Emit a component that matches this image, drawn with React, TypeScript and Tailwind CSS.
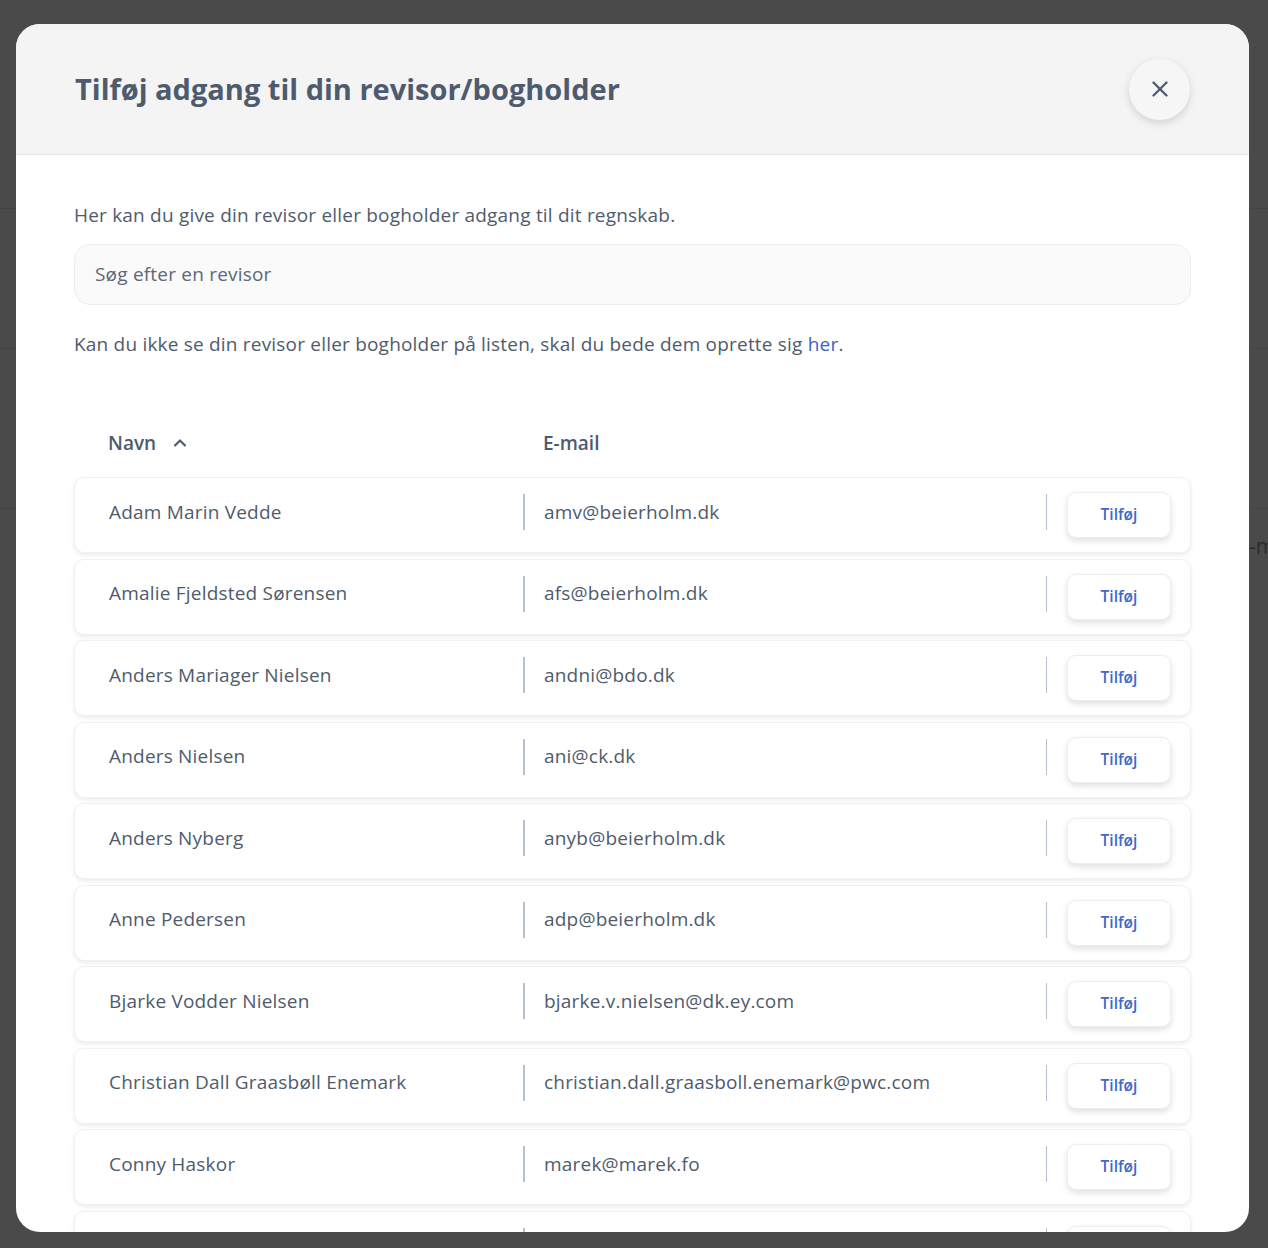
import React from "react";
import { X, ChevronUp } from "lucide-react";

const rows = [
  { name: "Adam Marin Vedde", email: "amv@beierholm.dk" },
  { name: "Amalie Fjeldsted Sørensen", email: "afs@beierholm.dk" },
  { name: "Anders Mariager Nielsen", email: "andni@bdo.dk" },
  { name: "Anders Nielsen", email: "ani@ck.dk" },
  { name: "Anders Nyberg", email: "anyb@beierholm.dk" },
  { name: "Anne Pedersen", email: "adp@beierholm.dk" },
  { name: "Bjarke Vodder Nielsen", email: "bjarke.v.nielsen@dk.ey.com" },
  { name: "Christian Dall Graasbøll Enemark", email: "christian.dall.graasboll.enemark@pwc.com" },
  { name: "Conny Haskor", email: "marek@marek.fo" },
  // next row is only partly scrolled into view, its text sits below the fold
  { name: "", email: "" },
];

function Row({ name, email }: { name: string; email: string }) {
  return (
    <div className="flex items-center h-[76px] shrink-0 bg-white rounded-[10px] border border-[#f1f1f1] shadow-[0_2px_4px_rgba(0,0,0,0.08)]">
      <div className="w-[448px] pl-[34px] pb-[6px] text-[19px] tracking-[0.2px] text-[#4f5b6d]">{name}</div>
      <div className="w-[2px] h-[36px] bg-[#b7c1cc] mb-[6px]" />
      <div className="flex-1 pl-[19px] pb-[6px] text-[19px] tracking-[0.2px] text-[#4f5b6d]">{email}</div>
      <div className="w-[1px] h-[36px] bg-[#b7c1cc] mb-[6px]" />
      <button className="ml-[20px] mr-[19px] w-[104px] h-[46px] rounded-[9px] bg-white border border-[#eeeeee] shadow-[0_3px_6px_rgba(0,0,0,0.12)] text-[15.5px] font-semibold text-[#3d6acb]">
        {name ? "Tilføj" : ""}
      </button>
    </div>
  );
}

export default function App() {
  return (
    <div
      className="relative w-[1268px] h-[1248px] overflow-hidden bg-[#4a4a4a] pt-[24px] pl-[16px] pr-[19px]"
      style={{ fontFamily: "'Open Sans', 'Noto Sans', sans-serif" }}
    >
      <div className="absolute left-0 right-0 top-[208px] h-px bg-[#444444]" />
      <div className="absolute left-0 right-0 top-[348px] h-px bg-[#444444]" />
      <div className="absolute left-0 right-0 top-[508px] h-px bg-[#444444]" />
      <div className="absolute left-[1249px] top-[531px] whitespace-nowrap text-[21px] text-[#2c2c2c]">-m</div>

      <div className="relative h-[1208px] bg-white rounded-[24px] overflow-hidden flex flex-col">
        <div className="h-[131px] shrink-0 bg-[#f4f4f4] border-b border-[#e6e6e6] flex items-center justify-between pl-[59px] pr-[59px]">
          <h1 className="text-[29px] font-bold text-[#4e5b6f]">
            Tilføj adgang til din revisor/bogholder
          </h1>
          <button className="w-[61px] h-[61px] rounded-full bg-[#f6f6f6] shadow-[0_3px_8px_rgba(0,0,0,0.14)] flex items-center justify-center text-[#4e5b6f]">
            <X size={26} strokeWidth={2.2} />
          </button>
        </div>

        <div className="px-[58px] pt-[47px] flex flex-col">
          <p className="text-[19px] tracking-[0.2px] text-[#4f5b6d] leading-[26px]">
            Her kan du give din revisor eller bogholder adgang til dit regnskab.
          </p>
          <div className="mt-[16px] h-[61px] rounded-[16px] bg-[#fafafa] border border-[#ececec] flex items-center pl-[20px] text-[19px] tracking-[0.2px] text-[#5d6778]">
            Søg efter en revisor
          </div>
          <p className="mt-[26px] text-[19px] tracking-[0.2px] text-[#4f5b6d] leading-[26px]">
            Kan du ikke se din revisor eller bogholder på listen, skal du bede dem oprette sig{" "}
            <span className="text-[#3a63c6]">her</span>.
          </p>

          <div className="mt-[74px] flex items-center h-[24px] text-[19px] font-semibold text-[#4e5b6f]">
            <div className="w-[469px] pl-[34px] flex items-center gap-[14px]">
              Navn
              <ChevronUp size={20} strokeWidth={2.6} />
            </div>
            <div>E-mail</div>
          </div>

          <div className="mt-[22px] flex flex-col gap-[5.5px]">
            {rows.map((r, i) => (
              <Row key={i} name={r.name} email={r.email} />
            ))}
          </div>
        </div>
      </div>
    </div>
  );
}
